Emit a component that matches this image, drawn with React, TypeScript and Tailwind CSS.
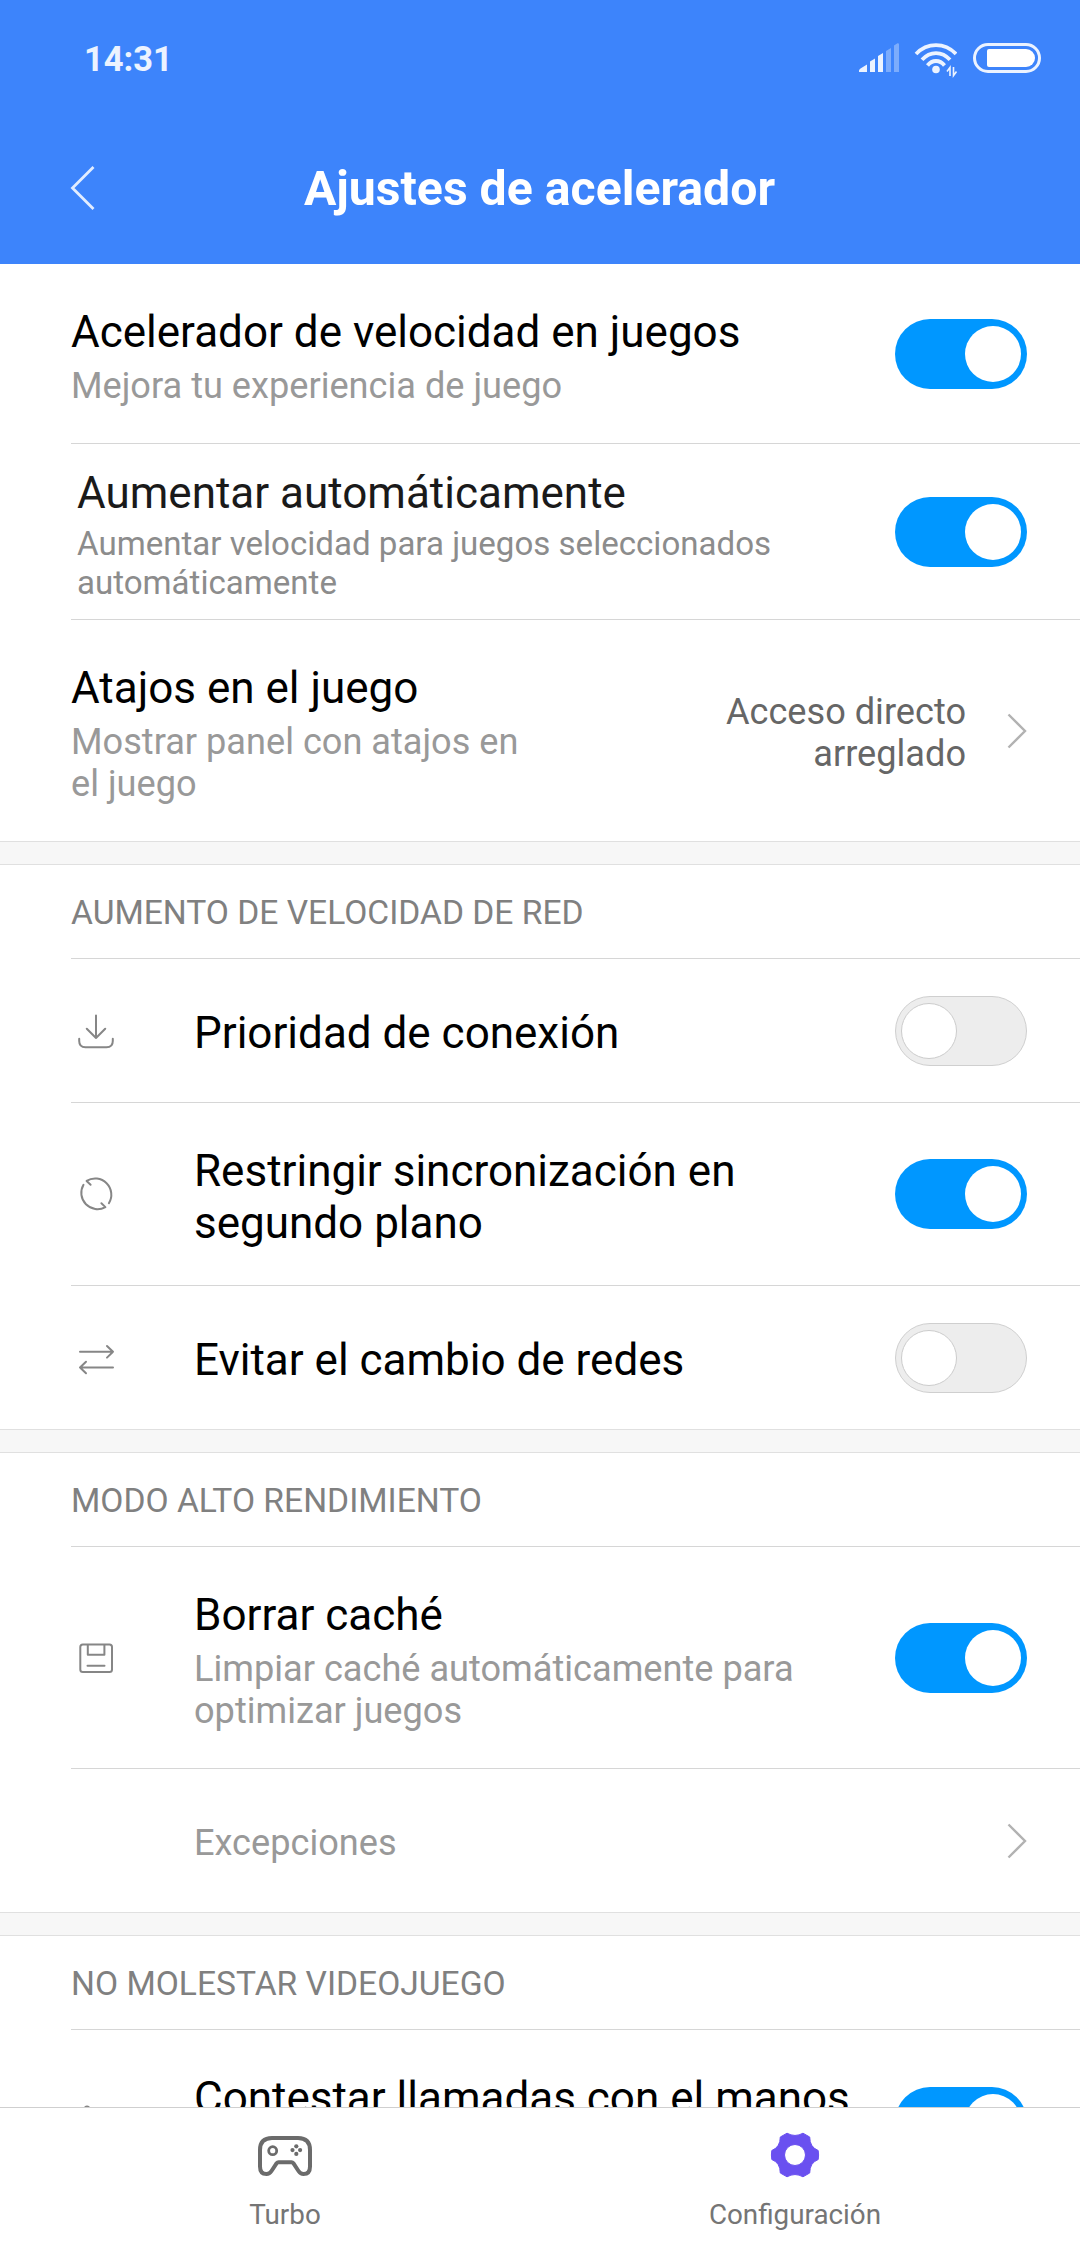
import React from "react";

function Toggle({ on }: { on?: boolean }) {
  return (
    <div
      role="switch"
      aria-checked={!!on}
      className={
        on
          ? "flex h-[70px] w-[132px] shrink-0 items-center justify-end rounded-full bg-[#0097ff] pr-[6px]"
          : "flex h-[70px] w-[132px] shrink-0 items-center justify-start rounded-full border border-[#cfcfcf] bg-[#ededed] pl-[5px]"
      }
    >
      <div
        className={
          on
            ? "size-[56px] rounded-full bg-white"
            : "size-[56px] rounded-full border border-[#cccccc] bg-white"
        }
      />
    </div>
  );
}

function Chevron() {
  return (
    <svg className="h-[36px] w-[20px] shrink-0" viewBox="0 0 20 36" fill="none" stroke="#b2b2b2" strokeWidth="2.4">
      <path d="M1.500 1.500L18 18L1.500 34.500" />
    </svg>
  );
}

const icon = "size-[48px] fill-none stroke-[#868686] stroke-2";

function DownloadIcon() {
  return (
    <svg className={icon} viewBox="0 0 48 48" strokeLinecap="round" strokeLinejoin="round">
      <path d="M24 8.500V31M14.800 21.800L24 31L33.200 21.800M7.200 31.800V34Q7.200 40.300 13.500 40.300H34.500Q40.800 40.300 40.800 34V31.800" />
    </svg>
  );
}

function SyncIcon() {
  return (
    <svg className={icon} viewBox="0 0 48 48" strokeLinecap="round" strokeLinejoin="round">
      <path d="M18.600 14.700L14.600 10.900A16.200 16.200 0 0 1 36.900 33.200M29.400 33.300L33.400 37.100A16.200 16.200 0 0 1 11.500 14.800" />
    </svg>
  );
}

function SwapIcon() {
  return (
    <svg className={icon} viewBox="0 0 48 48" strokeLinecap="round" strokeLinejoin="round">
      <path d="M8 17.800H41M35 12L41 17.800L35 23.600M41 33.500H8M14 27.700L8 33.500L14 39.300" />
    </svg>
  );
}

function DiskIcon() {
  return (
    <svg className={icon} viewBox="0 0 48 48" strokeLinecap="round" strokeLinejoin="round">
      <rect x="8.300" y="10.500" width="31.700" height="27.500" rx="2.500" />
      <path d="M15.800 11V20.800H32.400V11M15.500 31.800H32.500" />
    </svg>
  );
}

function PhoneIcon() {
  return (
    <svg className={icon} viewBox="0 0 48 48" strokeLinecap="round" strokeLinejoin="round">
      <path d="M9.500 13.500L13.200 9.300Q15 7.500 16.800 9.300L21 15.500Q22 17.500 20.500 19L18.500 21.500Q21 26.500 26.500 29.500L29 27.500Q31 26 33 27.500L38 31.500Q39.500 33 38 35L35 38Q31 40 23 34T9 19.500Q8 15.500 9.500 13.500Z" />
    </svg>
  );
}

function SignalIcon() {
  return (
    <svg className="h-[30px] w-[42px]" viewBox="0 0 42 30" fill="#fff">
      <path fillOpacity=".9" d="M1 29V27.500Q1.200 26.500 2.500 25.500L9 21.500V29ZM12 18.500L17 15.500V29H12ZM20 13L25 10V29H20Z" />
      <path fillOpacity=".33" d="M28 8L33 5V29H28ZM36 2.500L39.500 .3Q41 0 41 1.500V29H36Z" />
    </svg>
  );
}

function WifiIcon() {
  return (
    <svg className="h-[36px] w-[44px]" viewBox="0 0 44 36" fill="none" stroke="#fff" strokeOpacity=".9" strokeWidth="3.800">
      <path d="M3 12Q11.500 3.200 23 3.200T43 12M9 17.800Q15 11.100 23 11.100T37 17.800M14.500 23.500Q18 19 23 19T31.500 23.500" />
      <circle cx="23" cy="27.500" r="3.800" fill="#fff" fillOpacity=".9" stroke="none" />
      <path strokeWidth="1.600" d="M37 34V25.500L34 29.500M40.500 25V33.500L43.500 29.500" />
    </svg>
  );
}

function GamepadIcon() {
  return (
    <svg className="h-[52px] w-[60px]" viewBox="0 0 60 52" fill="none" stroke="#6b6b6b">
      <path
        strokeWidth="4"
        strokeLinejoin="round"
        d="M17 8H43Q55 8 55 20V36.500Q55 44 48.500 44Q45.500 44 43.500 41L38.500 33.300Q37.600 32.300 36.500 32.300H23.500Q22.400 32.300 21.500 33.300L16.500 41Q14.500 44 11.500 44Q5 44 5 36.500V20Q5 8 17 8Z"
      />
      <circle cx="17.700" cy="20.700" r="4" strokeWidth="2.800" />
      <g fill="#6b6b6b" stroke="none">
        <circle cx="41.300" cy="16.300" r="2.100" />
        <circle cx="41.300" cy="23.900" r="2.100" />
        <circle cx="37.500" cy="20.100" r="2.100" />
        <circle cx="45.100" cy="20.100" r="2.100" />
      </g>
    </svg>
  );
}

function GearIcon() {
  return (
    <svg className="h-[52px] w-[60px]" viewBox="0 0 60 52" fill="#6a50f0">
      <path
        fillRule="evenodd"
        stroke="#6a50f0"
        strokeLinejoin="round"
        d="M22 3.200Q30 7.700 38 3.200L44.700 7Q44.700 17.200 53.200 20.500Q54 25 53.200 29.500Q44.700 32.800 44.700 43L38 46.800Q30 42.300 22 46.800L15.300 43Q15.300 32.800 6.800 29.500Q6 25 6.800 20.500Q15.300 17.200 15.300 7ZM30 14.500A10.500 10.500 0 1 0 30 35.500A10.500 10.500 0 1 0 30 14.500Z"
      />
    </svg>
  );
}

function SectionGap() {
  return <div className="h-[24px] shrink-0 border-y border-[#e0e0e0] bg-[#f7f7f7]" />;
}

function Section({ title, children }: { title: string; children: React.ReactNode }) {
  return (
    <section className="shrink-0">
      <h2 className="ml-[71px] flex h-[94px] items-center border-b border-[#d6d6d6] pt-[2px] text-[33.6px] leading-[40px] text-[#808080]">
        {title}
      </h2>
      {children}
    </section>
  );
}

interface RowProps {
  title: string;
  sub?: string;
  icon?: React.ReactNode;
  height: string;
  textWidth?: string;
  last?: boolean;
  children: React.ReactNode;
}

function Row({ title, sub, icon: glyph, height, textWidth = "w-[680px]", last, children }: RowProps) {
  return (
    <div
      className={`ml-[71px] flex shrink-0 items-center pr-[53px] ${last ? "" : "border-b border-[#d6d6d6]"} ${height}`}
    >
      {glyph && <div className="mr-[74px] ml-px shrink-0">{glyph}</div>}
      <div className={`shrink-0 ${sub ? "pt-[6px]" : "pt-[5px]"} ${textWidth}`}>
        <div className="text-[44px] leading-[52px] text-black">{title}</div>
        {sub && <div className="mt-[7px] text-[36.15px] leading-[42px] text-[#999]">{sub}</div>}
      </div>
      <div className="ml-auto flex items-center">{children}</div>
    </div>
  );
}

export default function App() {
  return (
    <div className="flex h-[2248px] w-[1080px] flex-col overflow-hidden bg-white font-[Roboto,sans-serif]">
      <header className="h-[264px] shrink-0 bg-[#3d84fb] text-white">
        <div className="flex h-[116px] items-center pr-[39px] pl-[84px]">
          <span className="pt-[1px] text-[34.5px] leading-[40px] font-bold text-white/90">14:31</span>
          <div className="ml-auto flex items-center">
            <SignalIcon />
            <div className="ml-[13px] pt-[4px]">
              <WifiIcon />
            </div>
            <div className="ml-[16px] h-[30px] w-[68px] rounded-full border-[3px] border-white/90 p-[3px] pl-[11px]">
              <div className="h-[18px] w-[48px] rounded-l-[2px] rounded-r-[9px] bg-white" />
            </div>
          </div>
        </div>
        <div className="flex h-[143px] items-center pl-[70px]">
          <svg className="h-[46px] w-[26px]" viewBox="0 0 26 46" fill="none" stroke="#fff" strokeOpacity=".85" strokeWidth="2.800">
            <path d="M23.500 2L2.500 23L23.500 44" />
          </svg>
          <h1 className="flex-1 pt-[2px] pr-[97px] text-center text-[48.2px] leading-[56px] font-bold">
            Ajustes de acelerador
          </h1>
        </div>
      </header>

      <main className="flex min-h-0 flex-1 flex-col overflow-hidden">
        <Row title="Acelerador de velocidad en juegos" sub="Mejora tu experiencia de juego" height="h-[180px]">
          <Toggle on />
        </Row>
        <div className="ml-[71px] flex h-[176px] shrink-0 items-center border-b border-[#d6d6d6] pr-[53px] pl-[6px]">
          <div className="w-[740px] pt-[5px]">
            <div className="text-[44px] leading-[52px] text-[#1a1a1a]">Aumentar automáticamente</div>
            <div className="mt-[5px] text-[33.1px] leading-[39px] text-[#8c8c8c]">
              Aumentar velocidad para juegos seleccionados automáticamente
            </div>
          </div>
          <div className="ml-auto">
            <Toggle on />
          </div>
        </div>
        <Row
          title="Atajos en el juego"
          sub="Mostrar panel con atajos en el juego"
          height="h-[221px]"
          textWidth="w-[480px]"
          last
        >
          <div className="mr-[41px] w-[260px] pt-[5px] text-right text-[36.15px] leading-[42px] text-[#666]">
            Acceso directo arreglado
          </div>
          <Chevron />
        </Row>

        <SectionGap />
        <Section title="AUMENTO DE VELOCIDAD DE RED">
          <Row title="Prioridad de conexión" height="h-[144px]" icon={<DownloadIcon />}>
            <Toggle />
          </Row>
          <Row
            title="Restringir sincronización en segundo plano"
            height="h-[183px]"
            textWidth="w-[600px]"
            icon={<SyncIcon />}
          >
            <Toggle on />
          </Row>
          <Row title="Evitar el cambio de redes" height="h-[143px]" icon={<SwapIcon />} last>
            <Toggle />
          </Row>
        </Section>

        <SectionGap />
        <Section title="MODO ALTO RENDIMIENTO">
          <Row
            title="Borrar caché"
            sub="Limpiar caché automáticamente para optimizar juegos"
            height="h-[222px]"
            textWidth="w-[640px]"
            icon={<DiskIcon />}
          >
            <Toggle on />
          </Row>
          <div className="ml-[71px] flex h-[143px] items-center pr-[53px] pl-[123px]">
            <span className="pt-[5px] text-[36.15px] leading-[42px] text-[#999]">Excepciones</span>
            <div className="ml-auto">
              <Chevron />
            </div>
          </div>
        </Section>

        <SectionGap />
        <Section title="NO MOLESTAR VIDEOJUEGO">
          <Row
            title="Contestar llamadas con el manos libres"
            height="h-[183px]"
            textWidth="w-[670px]"
            icon={<PhoneIcon />}
            last
          >
            <Toggle on />
          </Row>
        </Section>
      </main>

      <nav className="flex h-[141px] shrink-0 border-t border-[#cfcfcf] bg-white px-[30px] text-[27.8px] leading-[33px] text-[#757575]">
        <div className="flex flex-1 flex-col items-center pt-[22px]">
          <GamepadIcon />
          <div className="mt-[16px]">Turbo</div>
        </div>
        <div className="flex flex-1 flex-col items-center pt-[22px]">
          <GearIcon />
          <div className="mt-[16px]">Configuración</div>
        </div>
      </nav>
    </div>
  );
}
